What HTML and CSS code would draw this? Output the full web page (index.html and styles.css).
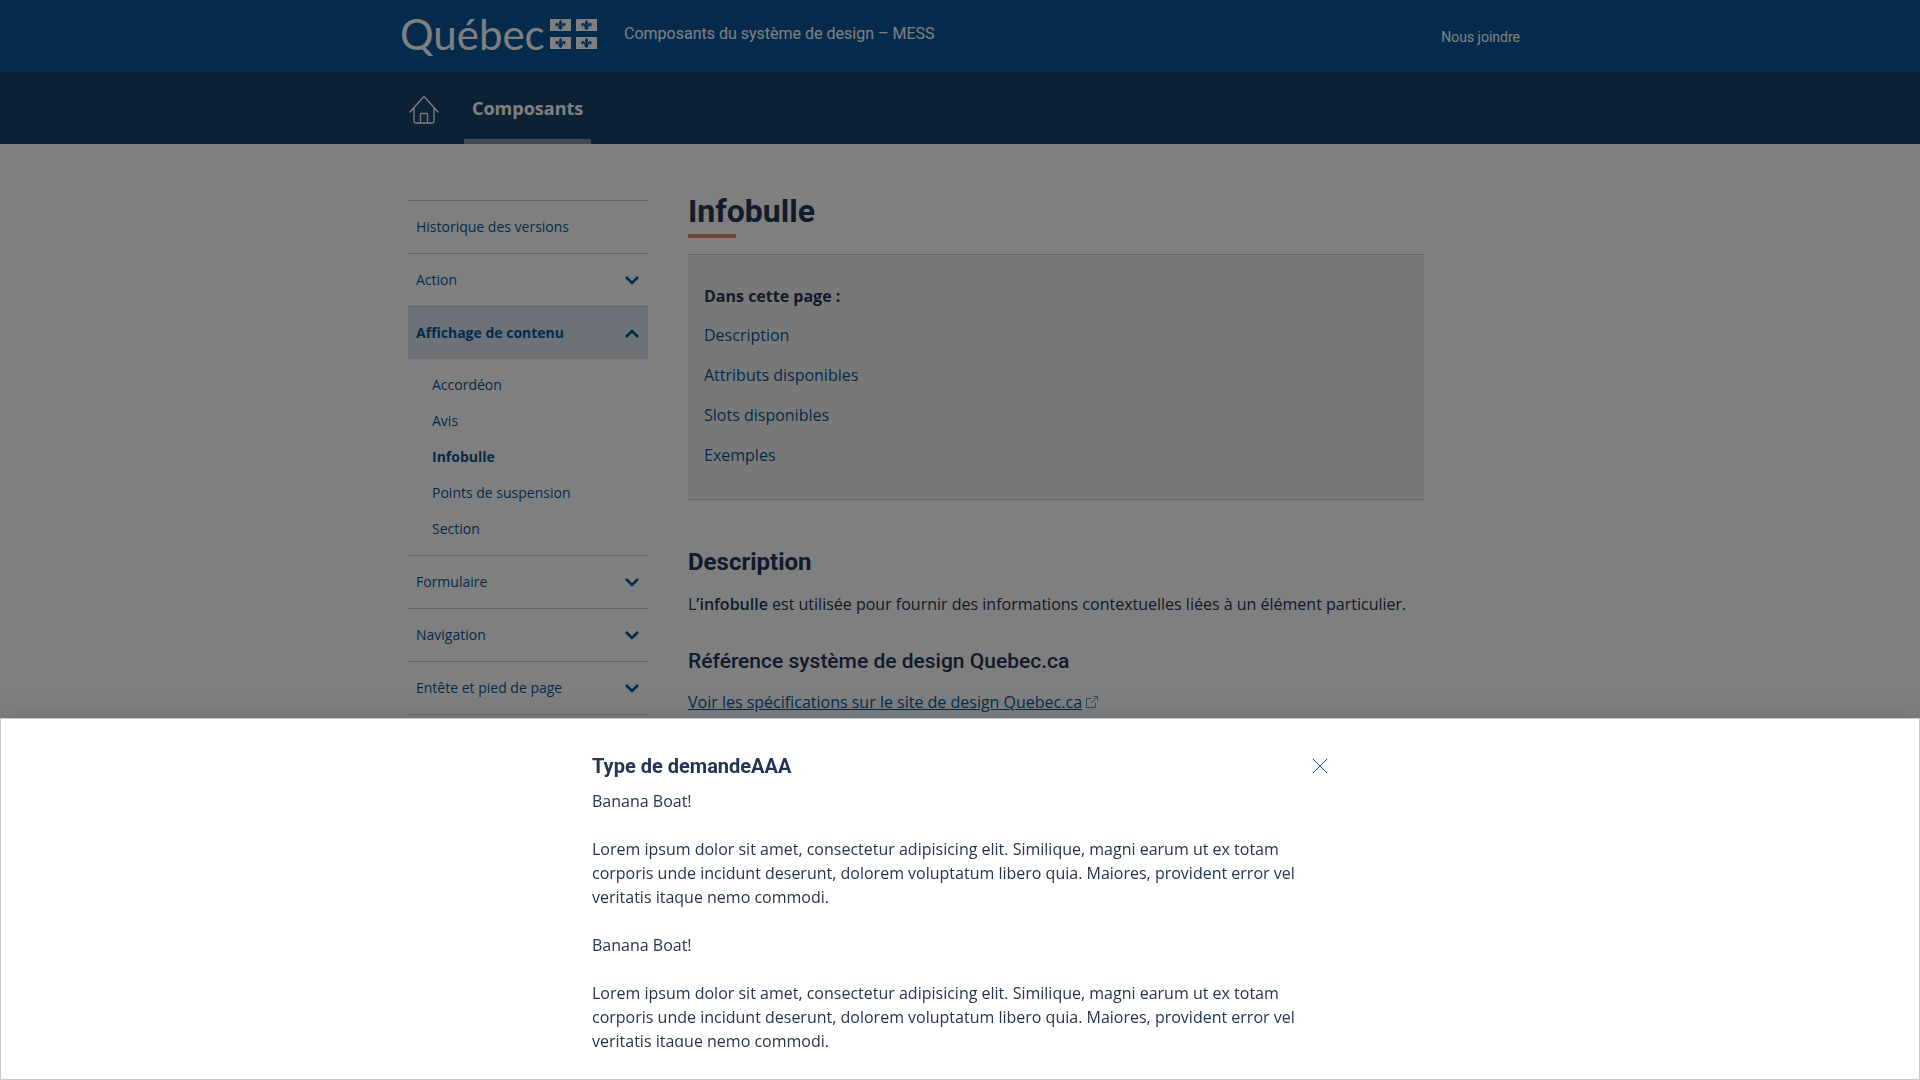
FILE: index.html
```html
<!DOCTYPE html>
<html lang="fr">
<head>
<meta charset="utf-8">
<meta name="viewport" content="width=device-width, initial-scale=1">
<title>Infobulle – Composants du système de design</title>
<link rel="stylesheet" href="styles.css">
</head>
<body>
<svg class="sprite" aria-hidden="true">
  <symbol id="chevron" viewBox="0 0 14 9"><path d="M1 1 7 7 13 1" fill="none" stroke="currentColor" stroke-width="2.6"/></symbol>
  <symbol id="lys" viewBox="0 0 21 12">
    <path class="flag" d="M0 0h21v12H0z"/>
    <path class="lys" d="M10.500 .8C12.300 2.500 12.400 3.800 11.300 6.800H9.700C8.600 3.800 8.700 2.500 10.500 .8ZM11.700 6.800C11.900 4.600 13.200 3.500 14.500 4C16.200 4.700 15.800 7.500 13.700 7.700C14.200 6.900 13.900 6.200 13.300 6.300C12.800 6.400 12.600 6.900 12.600 7.500V8.500H11.700C11.700 9.200 12.200 9.500 12.900 9.500C12.400 10.400 11.500 10.400 11.200 9.900L10.500 11.400L9.800 9.900C9.500 10.400 8.600 10.400 8.100 9.500C8.800 9.500 9.300 9.200 9.300 8.500H8.400V7.500C8.400 6.900 8.200 6.400 7.700 6.300C7.100 6.200 6.800 6.900 7.300 7.700C5.200 7.500 4.800 4.700 6.500 4C7.800 3.500 9.100 4.600 9.300 6.800Z"/>
  </symbol>
</svg>

<header>
  <div class="banner">
    <div class="container banner-row">
      <a class="logo" href="#" aria-label="Québec">
        <span class="wordmark">Québec</span>
        <svg class="flags" width="47" height="30" viewBox="0 0 47 30" aria-hidden="true">
          <use href="#lys" x="0" y="0" width="21" height="12"/>
          <use href="#lys" x="26" y="0" width="21" height="12"/>
          <use href="#lys" x="0" y="18" width="21" height="12"/>
          <use href="#lys" x="26" y="18" width="21" height="12"/>
        </svg>
      </a>
      <a class="site-title" href="#">Composants du système de design – MESS</a>
      <a class="contact" href="#">Nous joindre</a>
    </div>
  </div>
  <nav class="main-nav" aria-label="Navigation principale">
    <div class="container nav-row">
      <a class="home" href="#" aria-label="Accueil">
        <svg width="30" height="28" viewBox="0 0 30 28" fill="none" stroke="currentColor" stroke-width="1.3" stroke-linecap="round" stroke-linejoin="round" aria-hidden="true">
          <path d="M1 16 14 1.500Q15 .5 16 1.500L29 16M5 12v13.500Q5 27 6.500 27h17Q25 27 25 25.500V12M11.500 27v-8.500Q11.500 17.500 12.500 17.500h5Q18.500 17.500 18.500 18.500V27"/>
        </svg>
      </a>
      <a class="nav-item" href="#" aria-current="page">Composants</a>
    </div>
  </nav>
</header>

<div class="container page">
  <nav class="side" aria-label="Menu latéral">
    <a class="side-row" href="#">Historique des versions</a>
    <button class="side-row" type="button">Action <svg class="chevron"><use href="#chevron"/></svg></button>
    <button class="side-row open" type="button" aria-expanded="true">Affichage de contenu <svg class="chevron"><use href="#chevron"/></svg></button>
    <ul class="sub">
      <li><a href="#">Accordéon</a></li>
      <li><a href="#">Avis</a></li>
      <li><a class="current" href="#">Infobulle</a></li>
      <li><a href="#">Points de suspension</a></li>
      <li><a href="#">Section</a></li>
    </ul>
    <button class="side-row" type="button">Formulaire <svg class="chevron"><use href="#chevron"/></svg></button>
    <button class="side-row" type="button">Navigation <svg class="chevron"><use href="#chevron"/></svg></button>
    <button class="side-row" type="button">Entête et pied de page <svg class="chevron"><use href="#chevron"/></svg></button>
  </nav>
  <main>
    <h1>Infobulle</h1>
    <section class="toc">
      <p class="toc-title">Dans cette page :</p>
      <ul>
        <li><a href="#description">Description</a></li>
        <li><a href="#">Attributs disponibles</a></li>
        <li><a href="#">Slots disponibles</a></li>
        <li><a href="#">Exemples</a></li>
      </ul>
    </section>
    <h2 id="description">Description</h2>
    <p>L<strong>’infobulle</strong> est utilisée pour fournir des informations contextuelles liées à un élément particulier.</p>
    <h3>Référence système de design Quebec.ca</h3>
    <p class="spec"><a href="#">Voir les spécifications sur le site de design Quebec.ca</a>
      <svg width="12" height="12" viewBox="0 0 12 12" fill="none" stroke="currentColor" aria-hidden="true"><path d="M5.500 2.500H.5v9h9v-5M7.500.5h4v4M11.500.5 5 7"/></svg>
    </p>
  </main>
</div>

<div class="backdrop"></div>
<dialog class="drawer" open aria-labelledby="drawer-title">
  <div class="drawer-inner">
    <div class="drawer-head">
      <h2 id="drawer-title">Type de demandeAAA</h2>
      <button class="close" type="button" aria-label="Fermer">
        <svg width="14" height="14" viewBox="0 0 14 14" fill="none" stroke="currentColor" aria-hidden="true"><path d="M0 0 14 14M14 0 0 14"/></svg>
      </button>
    </div>
    <div class="drawer-body">
      <p>Banana Boat!</p>
      <p>Lorem ipsum dolor sit amet, consectetur adipisicing elit. Similique, magni earum ut ex totam corporis unde incidunt deserunt, dolorem voluptatum libero quia. Maiores, provident error vel veritatis itaque nemo commodi.</p>
      <p>Banana Boat!</p>
      <p>Lorem ipsum dolor sit amet, consectetur adipisicing elit. Similique, magni earum ut ex totam corporis unde incidunt deserunt, dolorem voluptatum libero quia. Maiores, provident error vel veritatis itaque nemo commodi.</p>
    </div>
  </div>
</dialog>
</body>
</html>
```
FILE: styles.css
```css
* { box-sizing: border-box; }
body {
  margin: 0;
  min-height: 100vh;
  overflow: hidden;
  background: #fff;
  color: #223654;
  font: 16px/24px "Open Sans", sans-serif;
}
h1, h2, h3, p, ul { margin: 0; padding: 0; }
ul { list-style: none; }
a { color: #095797; text-decoration: none; }
button { border: 0; background: none; font: inherit; text-align: left; cursor: pointer; }
h1, h2, h3 { font-family: Roboto, sans-serif; }
.sprite { display: none; }
.container { max-width: 1120px; margin: 0 auto; }

.banner { background: #095797; }
.banner-row { display: flex; align-items: center; height: 72px; }
.banner a { color: #fff; font-family: Roboto, sans-serif; }
.logo { display: flex; align-items: center; gap: 8px; padding-bottom: 4px; }
.banner .wordmark { width: 142px; font: 42px/48px Lato, sans-serif; }
.flags { margin-top: -1px; }
.flag { fill: #fff; }
.lys { fill: #095797; }
.site-title { margin-left: 27px; padding-bottom: 4px; }
.contact { margin-left: auto; padding-top: 2px; font-size: 14px; }

.main-nav { background: #19406c; }
.nav-row { display: flex; height: 72px; padding-left: 8px; gap: 24px; }
.home { display: flex; align-items: center; justify-content: center; padding-top: 4px; width: 32px; color: #fff; }
.nav-item {
  padding: 24px 8px 0;
  border-bottom: 5px solid #8893a2;
  color: #fff;
  font-size: 18px;
  font-weight: 700;
}

.page { display: grid; grid-template-columns: 240px minmax(0, 736px); gap: 40px; padding: 48px 8px; }
.side { padding-top: 8px; font-size: 14px; }
.side-row {
  display: flex;
  align-items: center;
  justify-content: space-between;
  width: 100%;
  height: 53px;
  padding: 0 8px;
  border-top: 1px solid #c5cad2;
  color: #095797;
}
.side-row:last-child { height: 54px; border-bottom: 1px solid #c5cad2; }
.side-row.open { background: #dae2f0; font-weight: 700; }
.chevron { width: 16px; height: 9px; }
.open .chevron { transform: rotate(180deg); }
.sub { padding: 8px 24px; }
.sub a { display: block; line-height: 36px; }
.sub .current { font-weight: 700; }

h1 { font-size: 32px; line-height: 38px; }
h1::after { display: block; width: 48px; height: 4px; margin-top: 4px; background: #e58271; content: ""; }
.toc { margin: 16px 0 48px; padding: 29px 16px 32px; border: solid #c5cad2; border-width: 1px 0; background: #f1f1f2; }
.toc-title { font-weight: 700; }
.toc ul { display: grid; gap: 16px; margin-top: 15px; }
h2 { font-size: 24px; line-height: 28px; }
h2 + p, h3 + p { margin-top: 16px; }
strong { font-weight: 600; }
h3 { margin-top: 32px; font-size: 21px; line-height: 26px; font-weight: 500; }
.spec a { text-decoration: underline; }
.spec svg { color: #4a98d9; }

.backdrop { position: fixed; inset: 0; background: rgba(0, 0, 0, .5); }
.drawer {
  position: fixed;
  inset: auto 0 0;
  width: 100%;
  max-width: none;
  margin: 0;
  padding: 32px;
  border: 1px solid #c5cad2;
  background: #fff;
  box-shadow: 0 0 24px rgba(34, 54, 84, .24);
  color: #223654;
}
.drawer-inner { max-width: 736px; margin: 0 auto; }
.drawer-head { display: flex; align-items: center; justify-content: space-between; height: 30px; margin-bottom: 8px; }
.drawer h2 { font-size: 20px; line-height: 24px; }
.close { display: flex; padding: 1px; color: #095797; }
.drawer-body { max-height: 258px; padding-right: 16px; overflow: hidden; }
.drawer-body p + p { margin-top: 24px; }
```
